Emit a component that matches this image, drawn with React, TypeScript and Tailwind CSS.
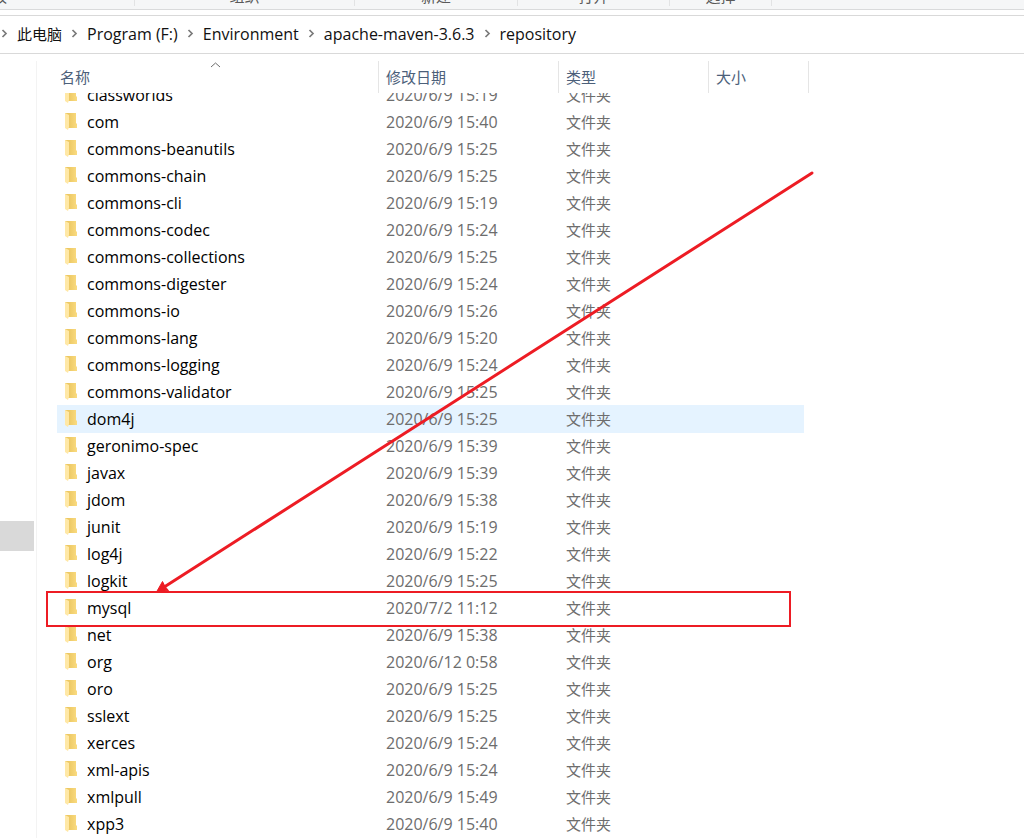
import React from "react";

type Entry = { name: string; date: string };

const entries: Entry[] = [
  { name: "classworlds", date: "2020/6/9 15:19" },
  { name: "com", date: "2020/6/9 15:40" },
  { name: "commons-beanutils", date: "2020/6/9 15:25" },
  { name: "commons-chain", date: "2020/6/9 15:25" },
  { name: "commons-cli", date: "2020/6/9 15:19" },
  { name: "commons-codec", date: "2020/6/9 15:24" },
  { name: "commons-collections", date: "2020/6/9 15:25" },
  { name: "commons-digester", date: "2020/6/9 15:24" },
  { name: "commons-io", date: "2020/6/9 15:26" },
  { name: "commons-lang", date: "2020/6/9 15:20" },
  { name: "commons-logging", date: "2020/6/9 15:24" },
  { name: "commons-validator", date: "2020/6/9 15:25" },
  { name: "dom4j", date: "2020/6/9 15:25" },
  { name: "geronimo-spec", date: "2020/6/9 15:39" },
  { name: "javax", date: "2020/6/9 15:39" },
  { name: "jdom", date: "2020/6/9 15:38" },
  { name: "junit", date: "2020/6/9 15:19" },
  { name: "log4j", date: "2020/6/9 15:22" },
  { name: "logkit", date: "2020/6/9 15:25" },
  { name: "mysql", date: "2020/7/2 11:12" },
  { name: "net", date: "2020/6/9 15:38" },
  { name: "org", date: "2020/6/12 0:58" },
  { name: "oro", date: "2020/6/9 15:25" },
  { name: "sslext", date: "2020/6/9 15:25" },
  { name: "xerces", date: "2020/6/9 15:24" },
  { name: "xml-apis", date: "2020/6/9 15:24" },
  { name: "xmlpull", date: "2020/6/9 15:49" },
  { name: "xpp3", date: "2020/6/9 15:40" },
];

const path = ["Program (F:)", "Environment", "apache-maven-3.6.3", "repository"];

const ribbonGroups = [
  { label: "剪贴板", width: "-ml-[38px] w-[173px] justify-start" },
  { label: "组织", width: "w-[220px] justify-center" },
  { label: "新建", width: "w-[163px] justify-center" },
  { label: "打开", width: "w-[152px] justify-center" },
  { label: "选择", width: "w-[102px] justify-center" },
];

function FolderIcon() {
  return (
    <svg width="12" height="17" viewBox="0 0 12 17" className="shrink-0" aria-hidden="true">
      <defs>
        <linearGradient id="folder-back" x1="0" x2="1" y1="0" y2="0">
          <stop offset="0.3" stopColor="#ecc863" />
          <stop offset="1" stopColor="#fadb80" />
        </linearGradient>
      </defs>
      <path d="M0 0H11V10L12 11V15H3L0 14Z" fill="url(#folder-back)" />
      <path d="M0 0L4 2V14L3 17L0 15Z" fill="#ffe8a6" />
    </svg>
  );
}

function Chevron() {
  return (
    <svg width="25" height="12" viewBox="0 0 25 12" className="shrink-0" aria-hidden="true">
      <path d="M10.5 2L14 5.5L10.5 9" fill="none" stroke="#7a7a7a" strokeWidth="1.7" />
    </svg>
  );
}

function Cell({ clipped, children }: { clipped: boolean; children?: React.ReactNode }) {
  return (
    <div className={clipped ? "flex h-[15px] items-end overflow-hidden" : "flex h-[27px] items-end"}>
      <div className="flex h-[27px] shrink-0 items-center whitespace-nowrap">{children}</div>
    </div>
  );
}

function Row({ entry, clipped }: { entry: Entry; clipped: boolean }) {
  const hovered = entry.name === "dom4j";
  const marked = entry.name === "mysql";
  const fill = hovered ? "bg-[#e5f3ff] shadow-[0_1px_0_#e5f3ff]" : "";
  return (
    <tr>
      <td className={`relative p-0 pl-2 text-base leading-5 text-black ${fill}`}>
        <Cell clipped={clipped}>
          <FolderIcon />
          <span className="ml-[10px]">{entry.name}</span>
        </Cell>
        {marked && (
          <div className="pointer-events-none absolute -left-[11px] -top-[3px] z-10 h-9 w-[745px] border-2 border-[#ed1c24]" />
        )}
      </td>
      <td className={`p-0 pl-[7px] text-base leading-5 ${fill}`}>
        <Cell clipped={clipped}>{entry.date}</Cell>
      </td>
      <td className={`p-0 pl-[7px] ${fill}`}>
        <Cell clipped={clipped}>文件夹</Cell>
      </td>
      <td className="p-0 pr-[5px]">
        <div className={clipped ? "h-[15px]" : `h-[27px] ${fill}`} />
      </td>
    </tr>
  );
}

export default function App() {
  return (
    <div className="relative flex h-screen flex-col overflow-hidden bg-white font-['Open_Sans','Noto_Sans_CJK_SC',sans-serif] text-[15px] leading-5 text-[#6d6d6d]">
      <div className="flex h-[10px] shrink-0 items-end overflow-hidden border-b border-[#d9dadb] bg-[#f5f6f7] pb-[3px] text-[#5a5a5a]">
        {ribbonGroups.map((g) => (
          <div key={g.label} className={`flex h-5 shrink-0 items-center border-r border-[#e2e3e4] ${g.width}`}>
            <span>{g.label}</span>
          </div>
        ))}
      </div>

      <nav
        aria-label="路径"
        className="mt-[5px] flex h-[39px] shrink-0 items-center border-y border-[#d9d9d9] pb-[2px] text-[#111]"
      >
        <div className="-ml-2 flex items-center">
          <Chevron />
          <a href="#" className="whitespace-nowrap">
            此电脑
          </a>
          {path.map((p) => (
            <React.Fragment key={p}>
              <Chevron />
              <a href="#" className="whitespace-nowrap text-base leading-5">
                {p}
              </a>
            </React.Fragment>
          ))}
        </div>
      </nav>

      <main className="flex min-h-0 flex-1 pt-[7px]">
        <aside className="w-[37px] shrink-0 border-r border-[#f3f3f3] pt-[460px]">
          <div className="h-[30px] w-[34px] bg-[#d9d9d9]" />
        </aside>
        <div className="min-w-0 flex-1 pl-5">
          <table className="w-[752px] table-fixed border-separate border-spacing-0">
            <colgroup>
              <col className="w-[322px]" />
              <col className="w-[180px]" />
              <col className="w-[150px]" />
              <col className="w-[100px]" />
            </colgroup>
            <thead className="text-left text-[#4c607a]">
              <tr className="h-8">
                <th className="relative border-r border-[#e5e5e5] p-0 pl-[3px] font-normal">
                  名称
                  <svg
                    width="11"
                    height="6"
                    viewBox="0 0 11 6"
                    className="absolute left-[153px] top-px"
                    aria-hidden="true"
                  >
                    <path d="M1 5L5.5 1L10 5" fill="none" stroke="#6d6d6d" />
                  </svg>
                </th>
                <th className="border-r border-[#e5e5e5] p-0 pl-[7px] font-normal">修改日期</th>
                <th className="border-r border-[#e5e5e5] p-0 pl-[7px] font-normal">类型</th>
                <th className="border-r border-[#e5e5e5] p-0 pl-[7px] font-normal">大小</th>
              </tr>
            </thead>
            <tbody>
              {entries.map((e, i) => (
                <Row key={e.name} entry={e} clipped={i === 0} />
              ))}
            </tbody>
          </table>
        </div>
      </main>

      <svg
        width="660"
        height="426"
        viewBox="0 0 660 426"
        className="pointer-events-none absolute left-[155px] top-[170px] z-20"
        aria-hidden="true"
      >
        <path d="M657 3L10 416.5" stroke="#ed1c24" strokeWidth="3" strokeLinecap="round" />
        <path d="M1.5 422L7.5 411.5L10 416.5L13.5 420.5Z" fill="#ed1c24" stroke="#ed1c24" strokeLinejoin="round" />
      </svg>
    </div>
  );
}
